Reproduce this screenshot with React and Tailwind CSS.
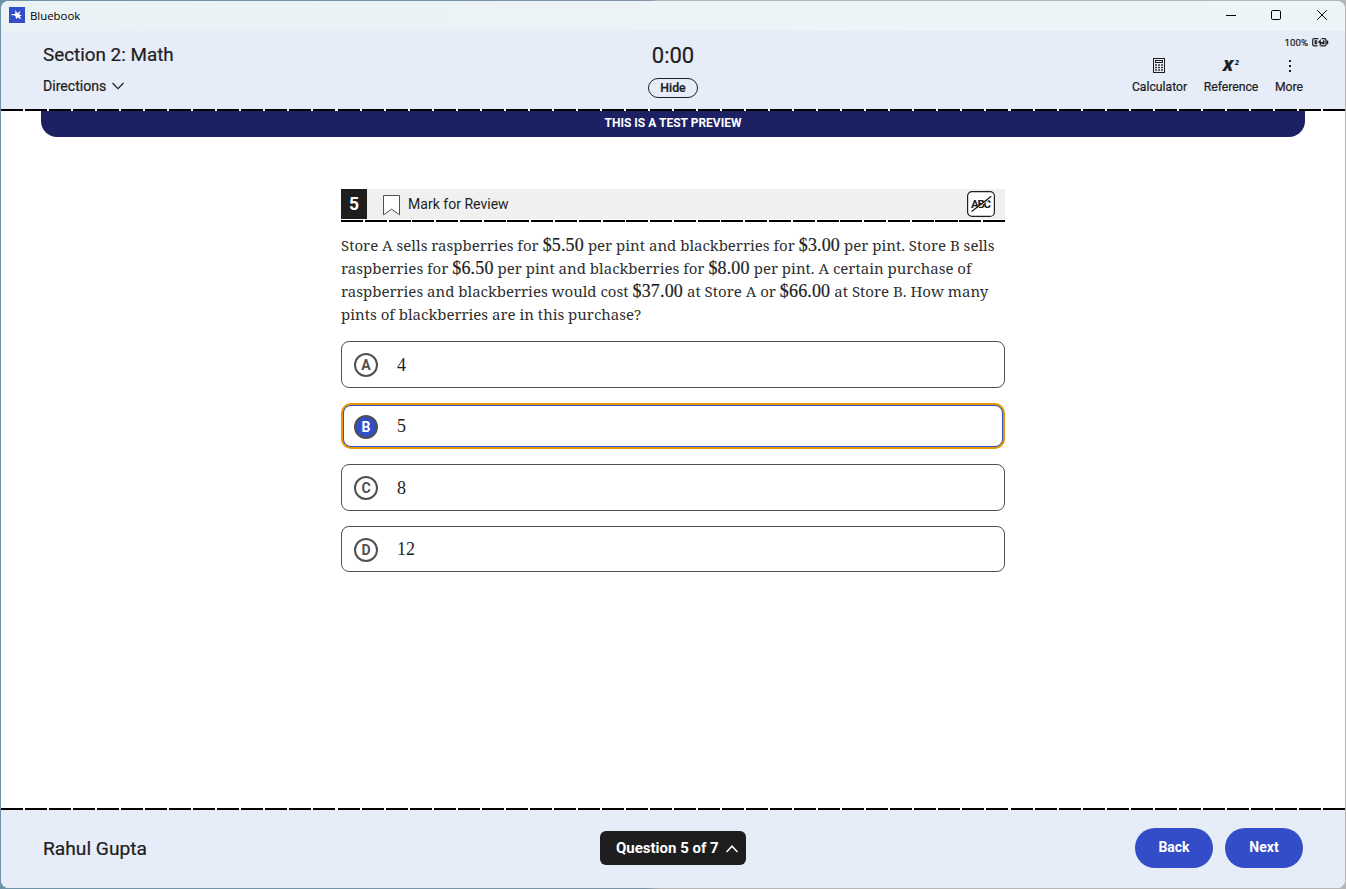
import React from "react";

const DASH_WIDE =
  "h-[2px] shrink-0 bg-[repeating-linear-gradient(90deg,#000_0px,#000_22px,#fff_22px,#fff_24.036px)]";
const DASH_CARD =
  "h-[2px] shrink-0 bg-[repeating-linear-gradient(90deg,#000_0px,#000_22px,#fff_22px,#fff_23.78px)]";

function Chevron({ up = false, className = "" }) {
  return (
    <svg width="12" height="8" viewBox="0 0 12 8" fill="none" stroke="currentColor" strokeWidth={up ? 1.5 : 1.2} className={className}>
      <path d={up ? "M.5 7 6 1.2 11.5 7" : "M.5 1 6 6.6 11.5 1"} />
    </svg>
  );
}

function TitleBar() {
  return (
    <div className="flex h-[30px] shrink-0 items-center bg-gradient-to-r from-[#ebf2f6] to-[#edf5f8] pb-[2px] pl-2 text-black">
      <svg width="16" height="16" viewBox="0 0 16 16">
        <rect width="16" height="16" fill="#324dc7" />
        <path d="M6.2 2.8 8.4 6.2 11.8 3.4 10 7.4l3 1-2.3 1.2 1.9 3-3.8-2.2-1.8 1.8-.4-3L5.4 8V6.8l1-.4z" fill="#fff" />
        <path d="M2.6 7.6h4" stroke="#fff" strokeWidth="1.3" />
      </svg>
      <span className="mt-[2px] ml-[5px] font-['Open_Sans',sans-serif] text-[11.4px] leading-4">Bluebook</span>
      <div className="ml-auto flex items-center pr-[18px]">
        <svg width="10" height="10" viewBox="0 0 10 10"><path d="M0 5.5h10" stroke="#000" /></svg>
        <svg className="ml-[35px]" width="10" height="10" viewBox="0 0 10 10"><rect x=".5" y=".5" width="9" height="9" rx="1.2" fill="none" stroke="#000" /></svg>
        <svg className="ml-9" width="10" height="10" viewBox="0 0 10 10"><path d="M.2.2l9.6 9.6M9.8.2.2 9.8" stroke="#000" /></svg>
      </div>
    </div>
  );
}

function Battery() {
  return (
    <svg width="17" height="9" viewBox="0 0 17 9" fill="none" stroke="#1e1e1e">
      <path d="M6.4.7H2.2Q.7.7.7 2.2v4.2q0 1.4 1.5 1.4H5.6M9.5.7h3q1.5 0 1.5 1.5v4.2q0 1.4-1.5 1.4H8.4" strokeWidth="1.2" />
      <path d="M2.6 2.3h2.6v1.1L4.2 4.5l1 .6v1.2H2.6z" fill="#1e1e1e" stroke="none" />
      <path d="M8.8 1 5.4 4.7h2.2v3.4l3.6-4.2H8.8zM11.2 2.3h1.3v4h-2.7z" fill="#1e1e1e" stroke="none" />
      <path d="M15.4 2.4v3.8" strokeWidth="1.6" />
    </svg>
  );
}

function CalculatorIcon() {
  return (
    <svg width="12" height="15" viewBox="0 0 12 15" fill="none" stroke="#1e1e1e">
      <rect x=".5" y=".5" width="11" height="14" />
      <rect x="2.5" y="2.5" width="7" height="2" />
      <path d="M2 7h2m1 0h2m1 0h2M2 9.5h2m1 0h2m1 0h2M2 12h2m1 0h2m1 0h2" strokeWidth="1.5" opacity=".85" />
    </svg>
  );
}

function Header() {
  return (
    <header className="grid h-[78px] shrink-0 grid-cols-3 bg-[#e6ecf8] [-webkit-text-stroke:0.22px_#1e1e1e]">
      <div className="pl-[42px] pt-3">
        <div className="text-[18.85px] leading-6">Section 2: Math</div>
        <div className="mt-[9px] flex items-center text-[14.1px] leading-5">
          Directions
          <Chevron className="ml-[6px]" />
        </div>
      </div>
      <div className="flex flex-col items-center pt-3">
        <div className="text-[22px] leading-[26px]">0:00</div>
        <div className="mt-[9px] flex h-5 w-[50px] items-center justify-center rounded-full border border-[#1e1e1e] text-[12.3px] font-medium">Hide</div>
      </div>
      <div className="flex flex-col items-end">
        <div className="mt-[5px] mr-4 flex h-3 items-center gap-1 text-[9.7px] leading-3">
          <span className="pt-px">100%</span> <Battery />
        </div>
        <div className="mt-[9px] mr-[42px] flex gap-[16px] text-[12.2px]">
          <div className="flex w-[55px] flex-col items-center">
            <div className="flex h-4 items-center pt-px pr-px"><CalculatorIcon /></div>
            <div className="mt-[6px] leading-4">Calculator</div>
          </div>
          <div className="flex w-[56px] flex-col items-center">
            <div className="flex h-4 items-start pt-px">
              <span className="font-['Noto_Sans',sans-serif] text-[15px] leading-[14px] font-black italic">X</span>
              <span className="ml-[2px] font-['Noto_Sans',sans-serif] text-[7px] leading-[9px] font-bold italic">2</span>
            </div>
            <div className="mt-[6px] leading-4">Reference</div>
          </div>
          <div className="flex w-[28px] flex-col items-center">
            <div className="flex h-4 flex-col items-center justify-center gap-[3px] pt-px pl-[2px]">
              <i className="size-[2px] bg-[#1e1e1e]" />
              <i className="size-[2px] bg-[#1e1e1e]" />
              <i className="size-[2px] bg-[#1e1e1e]" />
            </div>
            <div className="mt-[6px] leading-4">More</div>
          </div>
        </div>
      </div>
    </header>
  );
}

function M({ children }) {
  return (
    <span className="mx-[4px] inline-block font-['Liberation_Serif',serif] text-[18px] tracking-[0.15px] text-[#1e1e1e] [-webkit-text-stroke:0.2px_#1e1e1e]">
      {children}
    </span>
  );
}

function Line({ children }) {
  return <div className="flex h-[23px] items-baseline whitespace-pre">{children}</div>;
}

const OPTIONS = [
  { letter: "A", value: "4", box: "h-[47px] border-[#505050] pl-3 pt-[11px]", digits: "" },
  { letter: "B", value: "5", selected: true, box: "mx-[2px] my-[2px] h-[42px] border-[#324dc7] pl-[10px] pt-[9px] shadow-[0_0_0_2px_#e59700]", digits: "-mt-px" },
  { letter: "C", value: "8", box: "h-[47px] border-[#505050] pl-3 pt-[11px]", digits: "" },
  { letter: "D", value: "12", box: "h-[46px] border-[#505050] pl-3 pt-[11px]", digits: "-mt-px" },
];

function Option({ letter, value, selected, box, digits }) {
  return (
    <div className={"flex items-start rounded-lg border bg-white " + box}>
      <div
        className={
          "flex size-6 shrink-0 items-center justify-center rounded-full border-2 border-[#505050] text-[14px] leading-none font-bold " +
          (selected ? "bg-[#324dc7] text-white" : "text-[#505050]")
        }
      >
        {letter}
      </div>
      <div className={"ml-[19px] font-['Liberation_Serif',serif] text-[18px] leading-6 " + digits}>{value}</div>
    </div>
  );
}

function Question() {
  return (
    <section className="mt-[52px] ml-[340px] w-[664px]">
      <div className="flex h-[30px] items-center bg-[#f0f0f0]">
        <div className="flex h-[30px] w-[26px] items-center justify-center bg-[#1e1e1e] text-[17.5px] font-bold text-white">5</div>
        <svg className="mt-[3px] ml-4" width="17" height="21" viewBox="0 0 17 21" fill="#fff" stroke="#505050">
          <path d="M.5.5h16v19.3l-8-5.6-8 5.6z" />
        </svg>
        <span className="mt-px ml-[8px] text-[14.05px]">Mark for Review</span>
        <svg className="mr-[10px] ml-auto" width="28" height="26" viewBox="0 0 28 26">
          <rect x=".6" y=".6" width="26.8" height="24.8" rx="4.5" fill="#fff" stroke="#1e1e1e" strokeWidth="1.2" />
          <text x="14" y="17" textAnchor="middle" textLength="20" fontSize="11.5" fontWeight="700" fill="#1e1e1e" fontFamily="Roboto">ABC</text>
          <path d="M5.4 21 24.6 6.2" stroke="#fff" strokeWidth="1" />
          <path d="M4.6 20.5 24.3 5.3" stroke="#1e1e1e" strokeWidth="1.3" />
        </svg>
      </div>
      <div className={"mt-px " + DASH_CARD} />
      <div className="mt-3 font-['Noto_Serif','DejaVu_Serif_Condensed','DejaVu_Serif',serif] text-[15px] leading-[23px] text-[#303030]">
        <Line>Store A sells raspberries for<M>$5.50</M>per pint and blackberries for<M>$3.00</M>per pint. Store B sells</Line>
        <Line>raspberries for<M>$6.50</M>per pint and blackberries for<M>$8.00</M>per pint. A certain purchase of</Line>
        <Line>raspberries and blackberries would cost<M>$37.00</M>at Store A or<M>$66.00</M>at Store B. How many</Line>
        <Line>pints of blackberries are in this purchase?</Line>
      </div>
      <div className="mt-[15px] flex flex-col gap-[15px]">
        {OPTIONS.map((o) => <Option key={o.letter} {...o} />)}
      </div>
    </section>
  );
}

function Footer() {
  return (
    <footer className="grid h-[78px] shrink-0 grid-cols-3 items-center bg-[#e6ecf8]">
      <div className="pl-[42px] text-[19.2px] [-webkit-text-stroke:0.22px_#1e1e1e]">Rahul Gupta</div>
      <div className="mt-[-2px] flex h-[34px] w-[146px] items-center justify-between justify-self-center rounded-md bg-[#1e1e1e] pt-px pr-[8px] pl-4 text-[15px] font-bold text-white">
        Question 5 of 7
        <Chevron up />
      </div>
      <div className="mt-[-3px] mr-[42px] flex gap-3 justify-self-end text-[14px] font-bold text-white">
        <div className="flex h-10 w-[78px] items-center justify-center rounded-full bg-[#324dc7]">Back</div>
        <div className="flex h-10 w-[78px] items-center justify-center rounded-full bg-[#324dc7]">Next</div>
      </div>
    </footer>
  );
}

export default function App() {
  return (
    <div className="h-[889px] w-[1346px] overflow-hidden bg-[linear-gradient(90deg,#6f93a6_0,#7d93a5_48%,#b5b5b5_49%,#b5b5b5_100%)] p-px font-['Roboto',sans-serif] text-[#1e1e1e]">
      <div className="flex h-[887px] w-[1344px] flex-col overflow-hidden rounded-lg bg-white">
        <TitleBar />
        <Header />
        <div className={DASH_WIDE} />
        <div className="mx-10 flex h-[26px] shrink-0 items-center justify-center rounded-b-2xl bg-[#1b2162] pb-[3px] text-[12px] font-bold text-white">
          THIS IS A TEST PREVIEW
        </div>
        <main className="min-h-0 flex-1">
          <Question />
        </main>
        <div className={DASH_WIDE} />
        <Footer />
      </div>
    </div>
  );
}
